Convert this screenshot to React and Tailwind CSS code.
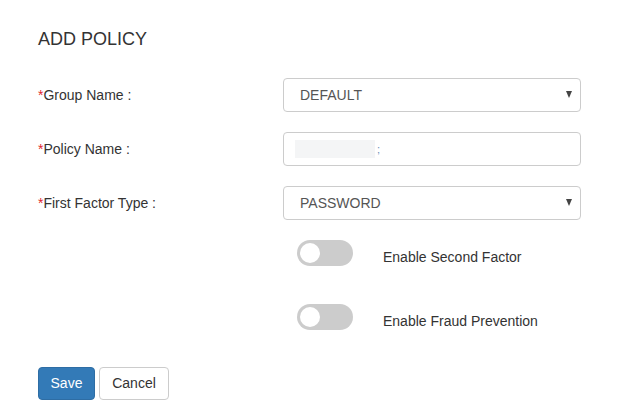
import React from 'react';

const Label = ({ children }) => (
  <label className="w-[245px] shrink-0 text-[14px] text-[#333]">
    <span className="text-[#e0262d]">*</span>
    {children}
  </label>
);

const Select = ({ value }) => (
  <div className="relative flex h-[34px] w-[298px] items-center rounded-[4px] border border-[#ccc] bg-white pl-[16px] text-[14px] text-[#555]">
    {value}
    <span className="absolute right-[8px] top-[12px] h-0 w-0 border-x-[3.5px] border-t-[7px] border-x-transparent border-t-[#444]" />
  </div>
);

const Toggle = ({ label }) => (
  <div className="flex items-start pl-[259px]">
    <div className="flex h-[26px] w-[56px] items-center rounded-full bg-[#ccc] px-[3px]">
      <div className="h-[20px] w-[20px] rounded-full bg-white" />
    </div>
    <span className="ml-[30px] mt-[9px] text-[14px] leading-[16px] text-[#333]">{label}</span>
  </div>
);

export default function App() {
  return (
    <div className="h-[415px] w-[624px] bg-white pl-[38px] pt-[28px]" style={{ fontFamily: '"Liberation Sans", Arial, sans-serif' }}>
      <h1 className="text-[18px] leading-[22px] text-[#333]">ADD POLICY</h1>

      <div className="mt-[28px] flex flex-col gap-[20px]">
        <div className="flex items-center">
          <Label>Group Name :</Label>
          <Select value="DEFAULT" />
        </div>
        <div className="flex items-center">
          <Label>Policy Name :</Label>
          <div className="flex h-[34px] w-[298px] items-center rounded-[4px] border border-[#ccc] bg-white pl-[11px] text-[14px]">
            <span className="h-[18px] w-[80px] bg-[#f4f5f6]" />
            <span className="ml-[2px] text-[11px] text-[#6a8fb8]">;</span>
          </div>
        </div>
        <div className="flex items-center">
          <Label>First Factor Type :</Label>
          <Select value="PASSWORD" />
        </div>
      </div>

      <div className="mt-[20px] flex flex-col gap-[38px]">
        <Toggle label="Enable Second Factor" />
        <Toggle label="Enable Fraud Prevention" />
      </div>

      <div className="mt-[37px] flex gap-[4px]">
        <button className="h-[33px] w-[57px] rounded-[4px] border border-[#2e6da4] bg-[#337ab7] text-[14px] text-white">Save</button>
        <button className="h-[33px] w-[70px] rounded-[4px] border border-[#ccc] bg-white text-[14px] text-[#333]">Cancel</button>
      </div>
    </div>
  );
}
